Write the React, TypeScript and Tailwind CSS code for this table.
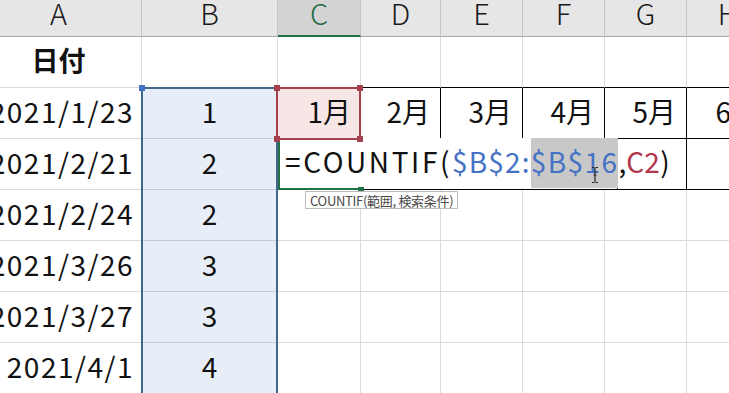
import React from "react";

const F = "font-['Noto_Sans_CJK_JP','Noto_Sans',sans-serif]";

const dates = ["2021/1/23", "2021/2/21", "2021/2/24", "2021/3/26", "2021/3/27", "2021/4/1"];
const nums = ["1", "2", "2", "3", "3", "4"];

function Header() {
  const cols: { l: string; w: string; sel?: boolean }[] = [
    { l: "A", w: "w-[166px]" },
    { l: "B", w: "w-[136px]" },
    { l: "C", w: "w-[83px]", sel: true },
    { l: "D", w: "w-[80px]" },
    { l: "E", w: "w-[82px]" },
    { l: "F", w: "w-[82px]" },
    { l: "G", w: "w-[82px]" },
    { l: "H", w: "w-[83px]" },
  ];
  return (
    <div className="flex h-[37px] shrink-0">
      {cols.map((c) => (
        <div
          key={c.l}
          className={
            c.w +
            " shrink-0 h-full border-r border-[#c4c4c4] flex justify-center text-[29px] leading-[22px] font-light " +
            (c.sel
              ? "bg-[#d3d3d3] text-[#1e6b40] border-b-2 border-b-[#217346]"
              : "bg-[#e6e6e6] text-[#1a1a1a] border-b border-b-[#a8a8a8]")
          }
        >
          <span className="pt-[1px]">{c.l}</span>
        </div>
      ))}
    </div>
  );
}

export default function App() {
  const g = "border-[#dadada]";
  return (
    <div className={"relative w-[729px] h-[393px] overflow-hidden bg-white text-[#111] " + F}>
      <div className="flex flex-col -ml-[24px] w-[800px]">
        <Header />
        {/* Row 1 */}
        <div className="flex h-[51px] shrink-0">
          <div className={"w-[166px] shrink-0 border-r border-b " + g + " flex justify-center pt-[9px] text-[27px] leading-none font-bold"}>
            日付
          </div>
          <div className={"w-[136px] shrink-0 border-r border-b " + g} />
          <div className={"w-[83px] shrink-0 border-r border-b " + g} />
          <div className={"w-[80px] shrink-0 border-r " + g + " border-b border-b-black"} />
          <div className={"w-[82px] shrink-0 border-r " + g + " border-b border-b-black"} />
          <div className={"w-[82px] shrink-0 border-r " + g + " border-b border-b-black"} />
          <div className={"w-[82px] shrink-0 border-r " + g + " border-b border-b-black"} />
          <div className={"w-[83px] shrink-0 border-r " + g + " border-b border-b-black"} />
        </div>
        {dates.map((d, i) => (
          <div key={i} className="flex h-[51px] shrink-0 text-[28px] leading-none">
            <div className={"w-[166px] shrink-0 border-r border-b " + g + " flex justify-end pr-[7px] pt-[9px] tracking-[1.5px]"}>
              {d}
            </div>
            <div className="relative w-[136px] shrink-0 border-r border-b border-[#c5cddb] bg-[#e8eef8] flex justify-center pt-[9px]">
              {nums[i]}
              {i === 0 && (
                <div className="absolute -left-[1px] -top-[1px] w-[137px] h-[320px] border-2 border-[#41678f] pointer-events-none z-10">
                  <div className="absolute -left-[4px] -top-[4px] w-[6px] h-[6px] bg-[#4472c4]" />
                </div>
              )}
            </div>
            {i === 0 && (
              <>
                <div className="relative w-[83px] shrink-0 bg-[#f8e5e6] flex justify-end pr-[10px] pt-[9px]">
                  1月
                  <div className="absolute -left-[2px] -top-[1px] w-[85px] h-[53px] border-2 border-[#a5404f] z-30">
                    <div className="absolute -left-[4px] -top-[4px] w-[6px] h-[6px] bg-[#a5404f]" />
                    <div className="absolute -right-[4px] -top-[4px] w-[6px] h-[6px] bg-[#a5404f]" />
                    <div className="absolute -left-[4px] -bottom-[4px] w-[6px] h-[6px] bg-[#a5404f]" />
                    <div className="absolute -right-[4px] -bottom-[4px] w-[6px] h-[6px] bg-[#a5404f]" />
                  </div>
                </div>
                <div className="w-[80px] shrink-0 border-r border-b border-black flex justify-end pr-[10px] pt-[9px]">2月</div>
                <div className="w-[82px] shrink-0 border-r border-b border-black flex justify-end pr-[10px] pt-[9px]">3月</div>
                <div className="w-[82px] shrink-0 border-r border-b border-black flex justify-end pr-[10px] pt-[9px]">4月</div>
                <div className="w-[82px] shrink-0 border-r border-b border-black flex justify-end pr-[10px] pt-[9px]">5月</div>
                <div className="w-[83px] shrink-0 border-r border-b border-black flex justify-end pr-[10px] pt-[9px]">6月</div>
              </>
            )}
            {i === 1 && (
              <>
                <div className="relative w-[83px] shrink-0 border-b border-black">
                  <div className="absolute left-0 -top-[1px] w-[340px] h-[52px] bg-white border-l-2 border-l-[#217346] border-r border-r-[#222] border-b border-b-black z-20">
                    <div className="flex pl-[5px] pt-[9px] text-[28px] leading-none whitespace-nowrap">
                      <span className="tracking-[2.6px]">=COUNTIF(</span>
                      <span className="text-[#4472c4] tracking-[1.2px]">$B$2:</span>
                      <span className="text-[#4472c4] tracking-[1.4px] bg-[#c8c8c8] -mt-[9px] pt-[9px] h-[50px]">$B$16</span>
                      <span>,</span>
                      <span className="text-[#b0364a] tracking-[0.3px]">C2</span>
                      <span>)</span>
                    </div>
                    <div className="absolute -left-[2px] -bottom-[1px] w-[82px] h-[2px] bg-[#217346]" />
                    <div className="absolute left-[78px] -bottom-[4px] w-[6px] h-[6px] bg-[#217346]" />
                  </div>
                  <div className="absolute left-[27px] top-[52px] z-20 border border-[#bcbcbc] bg-white px-[4px] h-[18px] flex items-center text-[13px] leading-none text-[#4a4a4a] whitespace-nowrap tracking-[-0.3px]">
                    COUNTIF(範囲, 検索条件)
                  </div>
                </div>
                <div className="w-[80px] shrink-0 border-b border-black" />
                <div className="w-[82px] shrink-0 border-b border-black" />
                <div className="w-[82px] shrink-0 border-b border-black" />
                <div className="w-[82px] shrink-0 border-r border-b border-black" />
                <div className={"w-[83px] shrink-0 border-r " + g + " border-b border-b-black"} />
              </>
            )}
            {i > 1 && (
              <>
                <div className={"w-[83px] shrink-0 border-r border-b " + g} />
                <div className={"w-[80px] shrink-0 border-r border-b " + g} />
                <div className={"w-[82px] shrink-0 border-r border-b " + g} />
                <div className={"w-[82px] shrink-0 border-r border-b " + g} />
                <div className={"w-[82px] shrink-0 border-r border-b " + g} />
                <div className={"w-[83px] shrink-0 border-r border-b " + g} />
              </>
            )}
          </div>
        ))}
      </div>
      {/* I-beam cursor */}
      <svg className="absolute left-[590px] top-[166px] z-30" width="10" height="18" viewBox="0 0 10 18">
        <path d="M2 1.5h2.5M5.5 1.5H8M5 2v14M2 16.5h2.5M5.5 16.5H8M3.5 9h3" stroke="#222" strokeWidth="1.2" fill="none" />
      </svg>
    </div>
  );
}
